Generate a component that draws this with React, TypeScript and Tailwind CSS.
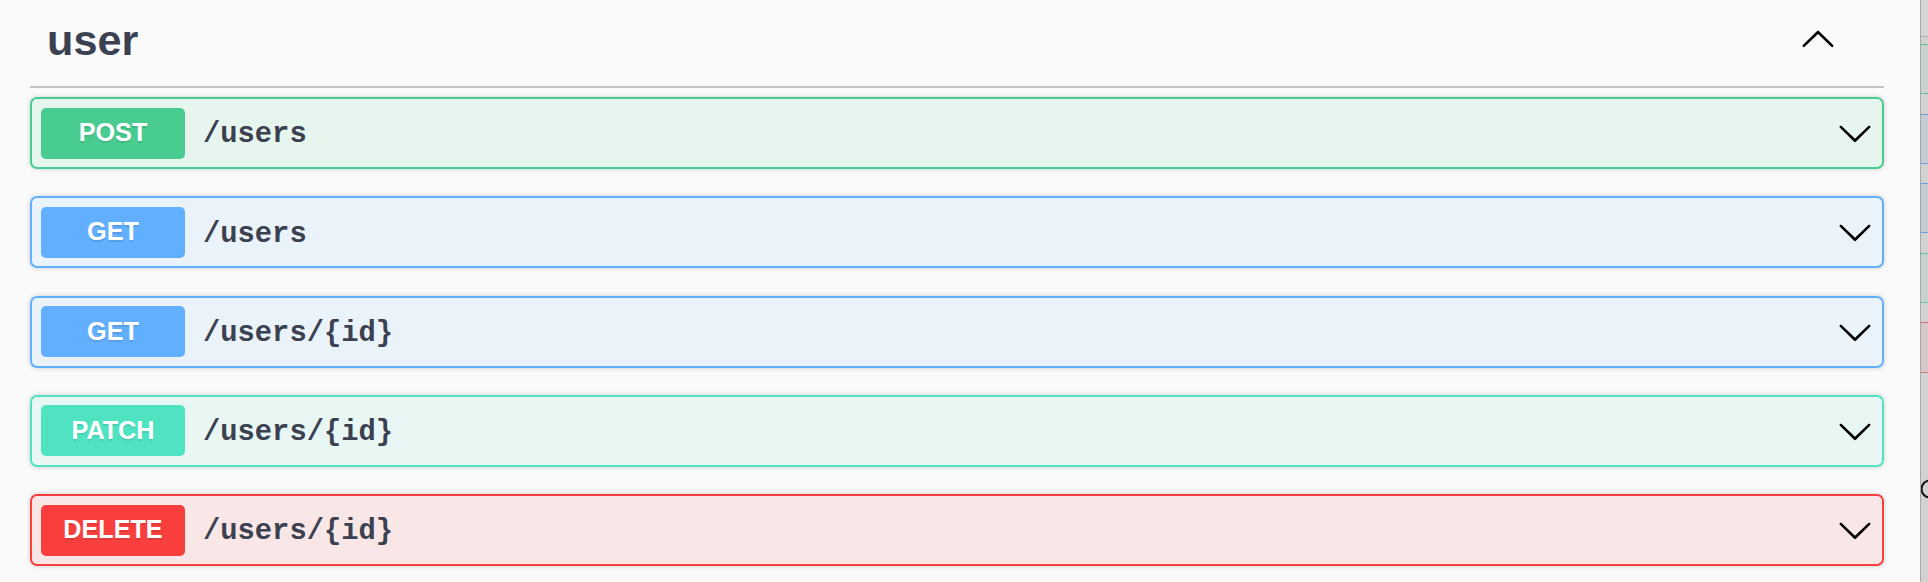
import React from "react";

const ARROW_DOWN =
  "M17.418 6.109c.272-.268.709-.268.979 0s.271.701 0 .969l-7.908 7.83c-.27.268-.707.268-.979 0l-7.908-7.83c-.27-.268-.27-.701 0-.969.271-.268.709-.268.979 0L10 13.25l7.418-7.141z";
const ARROW_UP =
  "M17.418 14.908c.272.268.709.268.979 0s.271-.701 0-.969l-7.908-7.83c-.27-.268-.707-.268-.979 0l-7.908 7.83c-.27.268-.27.701 0 .969.271.268.709.268.979 0L10 7.767l7.418 7.141z";

type Op = {
  method: string;
  path: string;
  block: string;
  badge: string;
};

const ops: Op[] = [
  {
    method: "POST",
    path: "/users",
    block: "border-[#49cc90] bg-[#49cc90]/10",
    badge: "bg-[#49cc90]",
  },
  {
    method: "GET",
    path: "/users",
    block: "border-[#61affe] bg-[#61affe]/10",
    badge: "bg-[#61affe]",
  },
  {
    method: "GET",
    path: "/users/{id}",
    block: "border-[#61affe] bg-[#61affe]/10",
    badge: "bg-[#61affe]",
  },
  {
    method: "PATCH",
    path: "/users/{id}",
    block: "border-[#50e3c2] bg-[#50e3c2]/10",
    badge: "bg-[#50e3c2]",
  },
  {
    method: "DELETE",
    path: "/users/{id}",
    block: "border-[#f93e3e] bg-[#f93e3e]/10",
    badge: "bg-[#f93e3e]",
  },
];

function Arrow({ d }: { d: string }) {
  return (
    <svg width="36" height="36" viewBox="0 0 20 20" className="shrink-0">
      <path d={d} fill="#000" />
    </svg>
  );
}

export default function App() {
  return (
    <div className="flex h-[582px] w-[1928px] overflow-hidden bg-[#fafafa] font-['Liberation_Sans',Arial,sans-serif] text-[#3b4151]">
      <div className="flex-1 pl-[30px] pr-[36px]">
        <div className="flex h-[88px] items-start justify-between border-b-2 border-[#c1c3c7]">
          <h3 className="pl-[17px] pt-[16px] text-[43.2px] font-bold leading-[49.6px]">
            user
          </h3>
          <div className="mr-[48px] mt-[20px]">
            <Arrow d={ARROW_UP} />
          </div>
        </div>
        <div className="mt-[9px] flex flex-col gap-[27.25px]">
          {ops.map((op, i) => (
            <div
              key={i}
              className={`flex h-[72px] items-center rounded-[7px] border-2 px-[9px] shadow-[0_0_5px_rgba(0,0,0,0.19)] ${op.block}`}
            >
              <div
                className={`flex h-[51px] w-[144px] shrink-0 items-center justify-center rounded-[5px] text-[25.2px] font-bold text-white [text-shadow:0_2px_0_rgba(0,0,0,0.1)] ${op.badge}`}
              >
                {op.method}
              </div>
              <span className="ml-[18px] pt-[4px] font-['Liberation_Mono','Courier_New',monospace] text-[28.8px] font-bold text-[#3b4151]">
                {op.path}
              </span>
              <div className="flex-1" />
              <Arrow d={ARROW_DOWN} />
            </div>
          ))}
        </div>
      </div>
      <div className="flex w-[8px] flex-col border-l border-[#a8a8a8] bg-[#d2d2d2]">
        <div className="h-[36px] shrink-0 bg-[#d6d6d6]" />
        <div className="h-[1px] shrink-0 bg-[#b0b0b0]" />
        <div className="h-[7px] shrink-0" />
        <div className="h-[50px] shrink-0 border-y border-[#5fbf92] bg-[#c9d3ce]" />
        <div className="h-[20px] shrink-0" />
        <div className="h-[50px] shrink-0 border-y border-[#6a9fdc] bg-[#c6ccd5]" />
        <div className="h-[19px] shrink-0" />
        <div className="h-[50px] shrink-0 border-y border-[#6a9fdc] bg-[#c6ccd5]" />
        <div className="h-[20px] shrink-0" />
        <div className="h-[50px] shrink-0 border-y border-[#5cc8ae] bg-[#c5d2cf]" />
        <div className="h-[19px] shrink-0" />
        <div className="h-[51px] shrink-0 border-y border-[#e07070] bg-[#d8c7c8]" />
        <div className="h-[106px] shrink-0" />
        <svg width="7" height="20" viewBox="0 0 7 20" className="shrink-0">
          <path d="M9 1.5 A8.5 8.5 0 0 0 9 18.5" fill="none" stroke="#111" strokeWidth="2" />
        </svg>
      </div>
    </div>
  );
}
